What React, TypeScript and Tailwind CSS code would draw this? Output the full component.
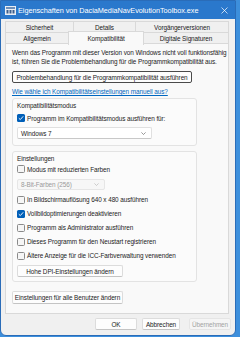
import React from "react";

const Check = ({ checked }: { checked?: boolean }) =>
  checked ? (
    <span className="w-[8px] h-[8px] rounded-[1.5px] bg-[#005fb8] flex items-center justify-center shrink-0">
      <svg width="6" height="6" viewBox="0 0 6 6">
        <path d="M0.8 3.2 L2.3 4.6 L5.2 1.3" fill="none" stroke="white" strokeWidth="0.9" />
      </svg>
    </span>
  ) : (
    <span className="w-[8px] h-[8px] rounded-[1.5px] border border-[#8a8a8a] bg-[#f6f6f6] shrink-0" />
  );

const Row = ({ checked, label }: { checked?: boolean; label: string }) => (
  <div className="h-[14px] flex items-center pl-[4px] gap-[2px]">
    <Check checked={checked} />
    <span className="whitespace-nowrap">{label}</span>
  </div>
);

const Chevron = ({ color }: { color: string }) => (
  <svg width="5" height="3" viewBox="0 0 5 3">
    <path d="M0.4 0.4 L2.5 2.5 L4.6 0.4" fill="none" stroke={color} strokeWidth="0.6" />
  </svg>
);

export default function App() {
  const tabBase =
    "absolute top-0 h-full flex items-center justify-center border border-b-0 border-[#d9d9d9] whitespace-nowrap";
  return (
    <div
      className="w-[240px] h-[337px] bg-[#3d8fdc] overflow-hidden text-[6.4px] leading-[9px] tracking-[-0.08px] text-[#1b1b1b]"
      style={{ fontFamily: '"Liberation Sans", Arial, sans-serif' }}
    >
      <div className="w-[236px] h-[336px] bg-[#f0f0f0] border border-[#2a6cb8] rounded-b-[6px] overflow-hidden flex flex-col">
        {/* Title bar */}
        <div className="h-[18px] bg-[#2a78cc] flex items-center pl-[4px] pr-[7px] shrink-0">
          <svg width="11" height="9" viewBox="0 0 11 9" className="shrink-0">
            <rect x="0" y="0" width="11" height="9" fill="#e9eef4" />
            <rect x="1" y="1" width="9" height="2" fill="#6f8fb8" />
            <rect x="1.5" y="4" width="2" height="3.5" fill="#3c5f8d" />
            <rect x="4.5" y="4" width="2" height="3.5" fill="#3c5f8d" />
            <rect x="7.5" y="4" width="2" height="3.5" fill="#3c5f8d" />
          </svg>
          <span className="ml-[2px] text-white text-[7.3px] tracking-[-0.04px] whitespace-nowrap">
            Eigenschaften von DaciaMediaNavEvolutionToolbox.exe
          </span>
          <svg width="7" height="7" viewBox="0 0 7 7" className="ml-auto">
            <path d="M0.5 0.5 L6.5 6.5 M6.5 0.5 L0.5 6.5" stroke="white" strokeWidth="0.7" />
          </svg>
        </div>

        {/* Tabs */}
        <div className="relative ml-[4px] w-[224px] h-[23px] mt-[2px] shrink-0">
          <div className="absolute left-0 top-0 w-full h-[11px]">
            <div className={tabBase + " left-0 w-[69px]"}>Sicherheit</div>
            <div className={tabBase + " left-[68px] w-[63px]"}>Details</div>
            <div className={tabBase + " left-[130px] w-[94px]"}>Vorgängerversionen</div>
          </div>
          <div className="absolute left-0 top-[11px] w-full h-[12px] border-b border-[#d9d9d9]">
            <div className={tabBase + " left-0 w-[64px] bg-[#f0f0f0]"}>Allgemein</div>
            <div className={tabBase + " left-[138px] w-[86px] bg-[#f0f0f0]"}>Digitale Signaturen</div>
          </div>
          <div className="absolute left-[63px] top-[10px] w-[76px] h-[14px] bg-[#f9f9f9] border border-b-0 border-[#d9d9d9] flex items-center justify-center z-10">
            Kompatibilität
          </div>
        </div>

        {/* Panel */}
        <div className="ml-[4px] w-[224px] h-[270px] bg-[#f9f9f9] border border-t-0 border-[#d9d9d9] px-[6px] pt-[4px] shrink-0 flex flex-col">
          <p className="whitespace-nowrap">
            Wenn das Programm mit dieser Version von Windows nicht voll funktionsfähig
            <br />
            ist, führen Sie die Problembehandlung für die Programmkompatibilität aus.
          </p>
          <div className="mt-[5px] w-[180px] h-[12px] bg-[#fdfdfd] border border-[#4a4a4a] rounded-[2px] flex items-center justify-center whitespace-nowrap">
            Problembehandlung für die Programmkompatibilität ausführen
          </div>
          <div className="mt-[4px] text-[#0067c0] underline whitespace-nowrap">
            Wie wähle ich Kompatibilitätseinstellungen manuell aus?
          </div>

          {/* Group 1 */}
          <div className="mt-[2px] w-[185px] h-[48px] border border-[#e3e3e3] rounded-[3px] bg-[#fbfbfb] flex flex-col">
            <div className="pt-[1.5px] pl-[4px] whitespace-nowrap">Kompatibilitätsmodus</div>
            <div className="mt-[1.5px]">
              <Row checked label="Programm im Kompatibilitätsmodus ausführen für:" />
            </div>
            <div className="mt-[2px] ml-[4px] w-[135px] h-[12px] bg-white border border-[#e0e0e0] border-b-[#c8c8c8] rounded-[2px] flex items-center pl-[3px] pr-[5px]">
              <span>Windows 7</span>
              <span className="ml-auto flex">
                <Chevron color="#555" />
              </span>
            </div>
          </div>

          {/* Group 2 */}
          <div className="mt-[5px] w-[185px] h-[131px] border border-[#e3e3e3] rounded-[3px] bg-[#fbfbfb] flex flex-col">
            <div className="pt-[2px] pl-[4px] whitespace-nowrap">Einstellungen</div>
            <div className="-mt-[1px]">
              <Row label="Modus mit reduzierten Farben" />
            </div>
            <div className="mt-[3px] ml-[4px] w-[88px] h-[11px] bg-[#f7f7f7] border border-[#e6e6e6] rounded-[2px] flex items-center pl-[3px] pr-[5px] text-[#9a9a9a]">
              <span>8-Bit-Farben (256)</span>
              <span className="ml-auto flex">
                <Chevron color="#b0b0b0" />
              </span>
            </div>
            <div className="mt-[2.5px]">
              <Row label="In Bildschirmauflösung 640 x 480 ausführen" />
              <Row checked label="Vollbildoptimierungen deaktivieren" />
              <Row label="Programm als Administrator ausführen" />
              <Row label="Dieses Programm für den Neustart registrieren" />
              <Row label="Ältere Anzeige für die ICC-Farbverwaltung verwenden" />
            </div>
            <div className="mt-[2.5px] ml-[4px] w-[106px] h-[12px] bg-[#fdfdfd] border border-[#dcdcdc] border-b-[#c4c4c4] rounded-[2px] flex items-center justify-center whitespace-nowrap">
              Hohe DPI-Einstellungen ändern
            </div>
          </div>

          <div className="mt-[9px] w-[111px] h-[13px] bg-[#fdfdfd] border border-[#dcdcdc] border-b-[#c4c4c4] rounded-[2px] flex items-center justify-center whitespace-nowrap">
            Einstellungen für alle Benutzer ändern
          </div>
        </div>

        {/* Bottom buttons */}
        <div className="mt-[4px] flex pl-[94px] gap-[5px] shrink-0">
          <div className="w-[42px] h-[12px] bg-[#fdfdfd] border border-[#dcdcdc] border-b-[#c4c4c4] rounded-[2px] flex items-center justify-center">
            OK
          </div>
          <div className="w-[38px] h-[12px] bg-[#fdfdfd] border border-[#dcdcdc] border-b-[#c4c4c4] rounded-[2px] flex items-center justify-center">
            Abbrechen
          </div>
          <div className="ml-[4px] w-[42px] h-[12px] bg-[#f5f5f5] border border-[#e5e5e5] rounded-[2px] flex items-center justify-center text-[#a3a3a3]">
            Übernehmen
          </div>
        </div>
      </div>
    </div>
  );
}
